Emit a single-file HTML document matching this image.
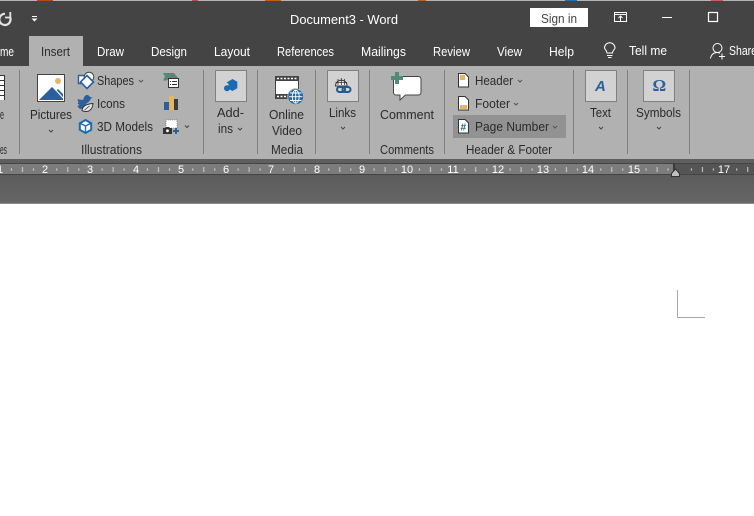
<!DOCTYPE html>
<html><head><meta charset="utf-8"><style>
html,body{margin:0;padding:0;width:754px;height:516px;overflow:hidden;background:#fff}
svg{display:block}
text{font-family:"Liberation Sans",sans-serif;font-size:12.5px}
.t{fill:#fff}.d{fill:#2b2b2b}.r{fill:#fff;font-size:11px}
</style></head><body>
<svg width="754" height="516" viewBox="0 0 754 516" xmlns="http://www.w3.org/2000/svg">
<defs>
<pattern id="tk" x="45.3" y="163" width="45.33" height="12" patternUnits="userSpaceOnUse">
<rect x="11" y="5.500" width="1" height="2" fill="#e0e0e0"/><rect x="22" y="4" width="1" height="5" fill="#d0d0d0"/><rect x="33" y="5.500" width="1" height="2" fill="#e0e0e0"/>
</pattern>
<linearGradient id="bg" x1="0" y1="0" x2="0" y2="1"><stop offset="0" stop-color="#5c5c5c"/><stop offset="1" stop-color="#666"/></linearGradient>
</defs>
<rect width="754" height="516" fill="#fff"/>
<rect width="754" height="67" fill="#444"/>
<rect width="754" height="1" fill="#b4b4b4"/>
<rect x="37" y="0" width="16" height="1" fill="#b7472a"/><rect x="192" y="0" width="6" height="1" fill="#b05050"/><rect x="265" y="0" width="16" height="1" fill="#b7602a"/><rect x="418" y="0" width="8" height="1" fill="#b7602a"/><rect x="565" y="0" width="12" height="1" fill="#2b6cb0"/><rect x="711" y="0" width="12" height="1" fill="#c06060"/>

<!-- title bar -->
<path d="M5 13.800 A5.600 5.600 0 1 0 10 17" fill="none" stroke="#e4e4e4" stroke-width="2.200"/>
<path d="M10.300 12v5.500h-5.300" fill="none" stroke="#e4e4e4" stroke-width="1.800"/>
<rect x="32" y="16" width="5" height="1" fill="#fff"/><path d="M31.500 18.500h6l-3 3z" fill="#fff"/>
<text class="t" x="290" y="24" textLength="108" lengthAdjust="spacingAndGlyphs">Document3  -  Word</text>
<rect x="530" y="8" width="58" height="19" fill="#fff"/>
<text x="541" y="23" fill="#444" textLength="36" lengthAdjust="spacingAndGlyphs">Sign in</text>
<rect x="614.500" y="12.500" width="12" height="9" fill="none" stroke="#fff"/><path d="M614.500 14.500h12" stroke="#fff"/><path d="M620.500 21v-5M618.500 18l2-2 2 2" fill="none" stroke="#fff"/>
<rect x="662" y="17" width="10" height="1" fill="#fff"/>
<rect x="708.500" y="12.500" width="9" height="9" fill="none" stroke="#fff" stroke-width="1.200"/>

<!-- tabs -->
<rect x="29" y="36" width="54" height="31" fill="#b1b1b1"/>
<text class="t" x="0" y="56" textLength="14" lengthAdjust="spacingAndGlyphs">me</text>
<text class="d" x="41" y="56" textLength="29" lengthAdjust="spacingAndGlyphs">Insert</text>
<text class="t" x="97" y="56" textLength="27" lengthAdjust="spacingAndGlyphs">Draw</text>
<text class="t" x="151" y="56" textLength="36" lengthAdjust="spacingAndGlyphs">Design</text>
<text class="t" x="214" y="56" textLength="36" lengthAdjust="spacingAndGlyphs">Layout</text>
<text class="t" x="277" y="56" textLength="57" lengthAdjust="spacingAndGlyphs">References</text>
<text class="t" x="361" y="56" textLength="45" lengthAdjust="spacingAndGlyphs">Mailings</text>
<text class="t" x="433" y="56" textLength="37" lengthAdjust="spacingAndGlyphs">Review</text>
<text class="t" x="497" y="56" textLength="25" lengthAdjust="spacingAndGlyphs">View</text>
<text class="t" x="549" y="56" textLength="25" lengthAdjust="spacingAndGlyphs">Help</text>
<path d="M607 53 C607 50 604.500 49.500 604.500 48 A5.200 5.200 0 0 1 615 48 C615 49.500 612.500 50 612.500 53 Z M607 55.500h5.500M608 57.500h3.500" fill="none" stroke="#fff" stroke-width="1"/>
<text class="t" x="629" y="55" textLength="38" lengthAdjust="spacingAndGlyphs">Tell me</text>
<circle cx="717.500" cy="48" r="4.500" fill="none" stroke="#fff"/><path d="M710.500 58.500 C711 54.500 714 52.500 717 52.500 C718 52.500 719 52.800 720 53.300M719 56.500h6M722 53.500v6" fill="none" stroke="#fff"/>
<text class="t" x="729" y="55" textLength="28" lengthAdjust="spacingAndGlyphs">Share</text>

<!-- ribbon -->
<rect x="0" y="66" width="754" height="93" fill="#b1b1b1"/>
<g fill="#808080">
<rect x="19" y="70" width="1" height="84"/><rect x="203" y="70" width="1" height="84"/><rect x="257" y="70" width="1" height="84"/><rect x="315" y="70" width="1" height="84"/><rect x="369" y="70" width="1" height="84"/><rect x="444" y="70" width="1" height="84"/><rect x="573" y="70" width="1" height="84"/><rect x="627" y="70" width="1" height="84"/><rect x="689" y="70" width="1" height="84"/>
</g>
<!-- table fragment -->
<rect x="0" y="75" width="5" height="25" fill="#fff"/><path d="M0 75.500h5M0 80.500h5M0 85.500h5M0 90.500h5M0 95.500h5" stroke="#333"/><rect x="4" y="75" width="1" height="25" fill="#333"/>
<text class="d" x="0" y="119" textLength="4" lengthAdjust="spacingAndGlyphs">e</text>
<text class="d" x="0" y="154" textLength="7" lengthAdjust="spacingAndGlyphs">es</text>

<!-- Pictures -->
<rect x="37.500" y="74.500" width="27" height="27" fill="#fff" stroke="#444"/>
<circle cx="58" cy="81" r="3" fill="#e3b568"/>
<path d="M39 100 L52 87 L56 91 L58 89 L63 94 L63 100 Z" fill="#2b5f9e"/><path d="M55 89 L63 98" stroke="#fff" stroke-width="1.100"/>
<text class="d" x="30" y="119" textLength="42" lengthAdjust="spacingAndGlyphs">Pictures</text>
<path d="M49 130l2 2 2-2" fill="none" stroke="#444"/>
<!-- Shapes -->
<path d="M78.500 75.500h8v8h-8z" fill="#fff" stroke="#2b5f9e" stroke-width="1.400"/>
<circle cx="89" cy="77" r="4.800" fill="#fff" stroke="#444"/>
<path d="M87 75.500l6.500 6.500-6.500 6.500-6.500-6.500z" fill="#fff" stroke="#2b5f9e" stroke-width="1.600"/>
<text class="d" x="97" y="85" textLength="37" lengthAdjust="spacingAndGlyphs">Shapes</text>
<path d="M139 80l2 2 2-2" fill="none" stroke="#555"/>
<!-- Icons -->
<path d="M78 99c2 1 4 1 5.500 .5 .3-2.500 1.500-4.500 3.500-4.500 1.500 0 2.500 1 3 2l2.500 .5-2 1.500c-.5 2-2 3-4 4.500l-3 4.500-3 1c-1.500-.5-2.500-1.500-3-3l2-1-2-1.500 1-1-1-3z" fill="#2b5f9e"/>
<path d="M82 110.500c.3-4.500 4.500-6.500 11-7-.5 5.500-3.500 8-7 8-1.500 0-3-.3-4-1z" fill="#e8e8e8" stroke="#333"/><path d="M84.500 110l5-4" stroke="#333" stroke-width=".8"/>
<text class="d" x="97" y="108" textLength="28" lengthAdjust="spacingAndGlyphs">Icons</text>
<!-- 3D -->
<path d="M85.500 120l5.700 3.200v6.600l-5.700 3.200-5.700-3.200v-6.600z" fill="#fff" stroke="#1c6bb0" stroke-width="2"/>
<path d="M80.500 123.500l5 2.500 5-2.500M85.500 126v6" fill="none" stroke="#1c6bb0" stroke-width="1.400"/>
<text class="d" x="97" y="131" textLength="56" lengthAdjust="spacingAndGlyphs">3D Models</text>
<!-- SmartArt -->
<path d="M163 73h11l4 5h-9l-2 2.500h-4l2-4z" fill="#4f8a7b"/>
<rect x="168.500" y="78.500" width="10" height="9" fill="#fff" stroke="#333"/><path d="M170 81.500h1M172 81.500h5M170 84.500h1M172 84.500h5" stroke="#333" stroke-width=".9"/>
<!-- chart -->
<rect x="164" y="102" width="5" height="8" fill="#2b5f9e"/><rect x="169" y="96" width="5" height="14" fill="#e3b568"/><rect x="174" y="99" width="4" height="11" fill="#3b3b3b"/>
<!-- screenshot -->
<rect x="166" y="120" width="11" height="8" fill="#fff" stroke="#555" stroke-width=".6" stroke-dasharray="1 1"/>
<path d="M163 128h2l1-1h3l1 1h2v6h-9z" fill="#333"/><circle cx="167.500" cy="130.800" r="1.400" fill="#fff"/>
<path d="M173 131h6M176 128v6" stroke="#2b5f9e" stroke-width="2"/>
<path d="M185 125.500l2 2 2-2" fill="none" stroke="#444"/>
<text class="d" x="81" y="154" textLength="61" lengthAdjust="spacingAndGlyphs">Illustrations</text>

<!-- Add-ins -->
<rect x="215.500" y="70.500" width="31" height="31" fill="#d2d2d2" stroke="#808080"/>
<path d="M232.500 79l4.800 2.700v6.600l-4.800 2.700-4-2.200v-5l-2-1.300z" fill="#1c6bb0"/><circle cx="227" cy="88.300" r="3" fill="#1c6bb0"/>
<text class="d" x="217" y="117" textLength="27" lengthAdjust="spacingAndGlyphs">Add-</text>
<text class="d" x="218" y="133" textLength="15" lengthAdjust="spacingAndGlyphs">ins</text>
<path d="M238 128l2 2 2-2" fill="none" stroke="#444"/>

<!-- Online video -->
<rect x="275.500" y="76.500" width="23" height="22" fill="#fff" stroke="#444"/>
<rect x="275" y="76" width="24" height="5" fill="#444"/><rect x="275" y="94" width="24" height="5" fill="#444"/>
<path d="M277 78.500h20M277 96.500h20" stroke="#fff" stroke-width="1.500" stroke-dasharray="2 1.500"/>
<circle cx="295.700" cy="96.700" r="8" fill="#1c6bb0" stroke="#b1b1b1" stroke-width="1"/>
<path d="M289 96.700h13.500M290 93h11.500M290 100.500h11.500M295.700 90v13.500" stroke="#fff" stroke-width=".9"/><ellipse cx="295.700" cy="96.700" rx="3.500" ry="6.500" fill="none" stroke="#fff" stroke-width=".9"/>
<text class="d" x="269" y="119" textLength="35" lengthAdjust="spacingAndGlyphs">Online</text>
<text class="d" x="272" y="135" textLength="30" lengthAdjust="spacingAndGlyphs">Video</text>
<text class="d" x="271" y="154" textLength="32" lengthAdjust="spacingAndGlyphs">Media</text>

<!-- Links -->
<rect x="327.500" y="70.500" width="31" height="31" fill="#d2d2d2" stroke="#808080"/>
<path d="M335.500 86a5.800 5.800 0 0 1 11.600 0z" fill="#f4f4f4" stroke="#333"/><path d="M335.500 82.500h11.600M341.300 78v7M338 79v6M344.600 79v6" stroke="#333" stroke-width=".8"/>
<rect x="337" y="87" width="8" height="5" rx="2.500" fill="none" stroke="#1d5a96" stroke-width="2"/><rect x="342.500" y="87" width="8" height="5" rx="2.500" fill="none" stroke="#1d5a96" stroke-width="2"/>
<text class="d" x="329" y="117" textLength="27" lengthAdjust="spacingAndGlyphs">Links</text>
<path d="M341 127l2 2 2-2" fill="none" stroke="#444"/>

<!-- Comment -->
<path d="M396 76.500h22.500a2.500 2.500 0 0 1 2.500 2.500v13.500a2.500 2.500 0 0 1-2.500 2.500h-13l-5.500 5v-5h-4a2.500 2.500 0 0 1-2.500-2.500v-13.500z" fill="#fff" stroke="#444"/>
<rect x="395" y="72" width="4" height="12" fill="#4f8a7b"/><rect x="391" y="76" width="12" height="4" fill="#4f8a7b"/>
<text class="d" x="380" y="119" textLength="54" lengthAdjust="spacingAndGlyphs">Comment</text>
<text class="d" x="380" y="154" textLength="54" lengthAdjust="spacingAndGlyphs">Comments</text>

<!-- Header footer -->
<rect x="453" y="115" width="113" height="23" fill="#929292"/>
<g fill="#fff" stroke="#333">
<path d="M458.500 73.500h6.500l3.500 3.500v10h-10z"/><path d="M458.500 96.500h6.500l3.500 3.500v10h-10z"/><path d="M458.500 119.500h6.500l3.500 3.500v10h-10z"/>
</g>
<rect x="460" y="75" width="5" height="5" fill="#e3b568"/><rect x="460" y="105" width="7" height="4" fill="#e3b568"/>
<text x="460.500" y="130.500" font-weight="bold" fill="#1d5a96" style="font-size:10px">#</text>
<text class="d" x="475" y="85" textLength="38" lengthAdjust="spacingAndGlyphs">Header</text>
<path d="M518 80l2 2 2-2" fill="none" stroke="#555"/>
<text class="d" x="475" y="108" textLength="35" lengthAdjust="spacingAndGlyphs">Footer</text>
<path d="M514 103l2 2 2-2" fill="none" stroke="#555"/>
<text class="d" x="475" y="131" textLength="74" lengthAdjust="spacingAndGlyphs">Page Number</text>
<path d="M553 126l2 2 2-2" fill="none" stroke="#555"/>
<text class="d" x="466" y="154" textLength="86" lengthAdjust="spacingAndGlyphs">Header &amp; Footer</text>

<!-- Text -->
<rect x="585.500" y="70.500" width="31" height="31" fill="#d2d2d2" stroke="#808080"/>
<text x="595" y="91" font-weight="bold" font-style="italic" fill="#2b5f9e" style="font-size:15px">A</text>
<text class="d" x="590" y="117" textLength="21" lengthAdjust="spacingAndGlyphs">Text</text>
<path d="M599 127l2 2 2-2" fill="none" stroke="#444"/>
<!-- Symbols -->
<rect x="643.500" y="70.500" width="31" height="31" fill="#d2d2d2" stroke="#808080"/>
<text x="652.500" y="91" font-weight="bold" fill="#2b5f9e" style="font-size:17px;font-family:'Liberation Serif',serif">Ω</text>
<text class="d" x="636" y="117" textLength="45" lengthAdjust="spacingAndGlyphs">Symbols</text>
<path d="M657 127l2 2 2-2" fill="none" stroke="#444"/>

<!-- ruler -->
<rect x="0" y="159" width="754" height="4" fill="#5f5f5f"/>
<rect x="0" y="175" width="754" height="28" fill="url(#bg)"/>
<rect x="0" y="163" width="674" height="12" fill="#7c7c7c"/>
<rect x="674" y="163" width="80" height="12" fill="#555"/>
<rect x="0" y="163" width="754" height="1" fill="#444"/>
<rect x="0" y="174" width="754" height="1" fill="#444"/>
<rect x="0" y="163" width="754" height="12" fill="url(#tk)"/>
<rect x="673" y="163" width="2" height="12" fill="#3a3a3a"/>
<path d="M671.500 176.500v-3l4-4.500 4 4.500v3z" fill="#c0c0c0" stroke="#333"/>
<g text-anchor="middle">
<text class="r" x="0" y="173">1</text><text class="r" x="45" y="173">2</text><text class="r" x="90" y="173">3</text><text class="r" x="136" y="173">4</text><text class="r" x="181" y="173">5</text><text class="r" x="226" y="173">6</text><text class="r" x="271" y="173">7</text><text class="r" x="317" y="173">8</text><text class="r" x="362" y="173">9</text><text class="r" x="407" y="173">10</text><text class="r" x="453" y="173">11</text><text class="r" x="498" y="173">12</text><text class="r" x="543" y="173">13</text><text class="r" x="588" y="173">14</text><text class="r" x="634" y="173">15</text><text class="r" x="724" y="173">17</text>
</g>
<rect x="0" y="203" width="754" height="1" fill="#8c8c8c"/>

<!-- page -->
<path d="M677.500 290v27.500H705" fill="none" stroke="#a8a8a8"/>
</svg>
</body></html>
